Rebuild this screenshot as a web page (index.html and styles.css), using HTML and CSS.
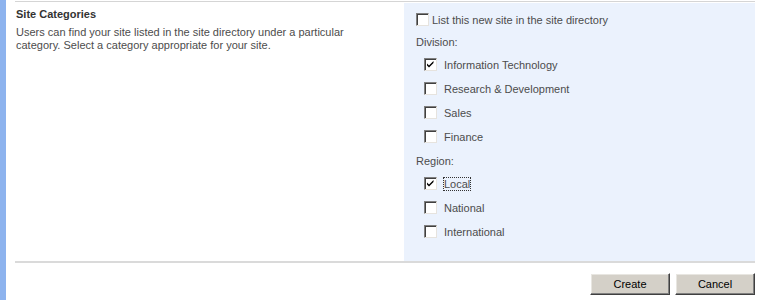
FILE: index.html
```html
<!DOCTYPE html>
<html>
<head>
<meta charset="utf-8">
<link rel="stylesheet" href="styles.css">
</head>
<body>
<div class="page">
  <div class="bar"></div>
  <div class="main">
    <div class="section">
      <div class="desc">
        <div class="title">Site Categories</div>
        <div class="text">Users can find your site listed in the site directory under a particular category. Select a category appropriate for your site.</div>
      </div>
      <div class="panel">
        <label class="top-check"><span class="cb"></span><span>List this new site in the site directory</span></label>
        <div class="group-label">Division:</div>
        <label class="item"><span class="cb checked"><svg viewBox="0 0 13 13" width="13" height="13"><path d="M3 5.5 L5 7.5 L9.5 3 L9.5 5 L5 9.5 L3 7.5 Z" fill="#000"/></svg></span><span>Information Technology</span></label>
        <label class="item"><span class="cb"></span><span>Research &amp; Development</span></label>
        <label class="item"><span class="cb"></span><span>Sales</span></label>
        <label class="item"><span class="cb"></span><span>Finance</span></label>
        <div class="group-label region">Region:</div>
        <label class="item"><span class="cb checked"><svg viewBox="0 0 13 13" width="13" height="13"><path d="M3 5.5 L5 7.5 L9.5 3 L9.5 5 L5 9.5 L3 7.5 Z" fill="#000"/></svg></span><span class="focus">Local</span></label>
        <label class="item"><span class="cb"></span><span>National</span></label>
        <label class="item"><span class="cb"></span><span>International</span></label>
      </div>
    </div>
    <div class="sep"></div>
    <div class="buttons">
      <button class="btn">Create</button>
      <button class="btn">Cancel</button>
    </div>
  </div>
</div>
</body>
</html>
```

FILE: styles.css
```css
* { box-sizing: border-box; }
html, body { margin: 0; padding: 0; background: #fff; }
body {
  font-family: "Liberation Sans", Arial, sans-serif;
  font-size: 11px;
  color: #4c4c4c;
  width: 768px;
  height: 300px;
  overflow: hidden;
}
.page { display: flex; height: 300px; }
.bar { width: 6px; background: #8db3ee; flex: none; }
.main { margin-left: 9px; width: 740px; padding-top: 1px; }
.section {
  display: grid;
  grid-template-columns: 389px 351px;
  border-top: 1px solid #d5d5d5;
  height: 260px;
}
.desc { padding: 6px 0 0 1px; }
.title { font-weight: bold; color: #333; font-size: 11px; line-height: 13px; }
.text { margin-top: 5px; line-height: 13px; color: #4c4c4c; width: 340px; }
.panel {
  background: #ebf2fd;
  padding: 10px 0 0 12px;
  margin-top: 1px;
}
.top-check { display: flex; align-items: center; gap: 3px; height: 13px; color: #4c4c4c; }
.group-label { margin-top: 10px; line-height: 13px; }
.group-label.region { margin-top: 12px; }
.item {
  display: flex;
  align-items: center;
  gap: 7px;
  height: 13px;
  margin-top: 11px;
  margin-left: 8px;
}
.group-label + .item { margin-top: 9px; }
.cb {
  width: 13px;
  height: 13px;
  flex: none;
  background: #fff;
  border-top: 1px solid #808080;
  border-left: 1px solid #808080;
  border-right: 1px solid #e6e3de;
  border-bottom: 1px solid #e6e3de;
  box-shadow: inset 1px 1px 0 #404040;
  position: relative;
}
.cb svg { position: absolute; left: -1px; top: -1px; }
.focus { outline: 1px dotted #333; outline-offset: 0; }
.sep { height: 2px; background: #dadada; margin-top: 0; }
.buttons {
  display: flex;
  justify-content: flex-end;
  gap: 5px;
  padding-top: 10px;
  padding-right: 0;
}
.btn {
  width: 80px;
  height: 22px;
  background: #d4d0c8;
  font-family: "Liberation Sans", Arial, sans-serif;
  font-size: 11px;
  color: #000;
  border-top: 1px solid #fff;
  border-left: 1px solid #fff;
  border-right: 1px solid #404040;
  border-bottom: 1px solid #404040;
  box-shadow: inset -1px -1px 0 #808080, inset 1px 1px 0 #e8e6e1;
  padding: 0;
}
```
